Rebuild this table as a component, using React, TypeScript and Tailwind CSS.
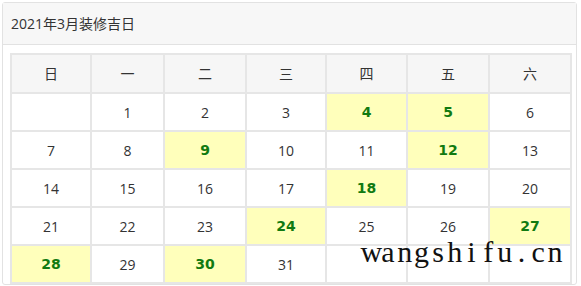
import React from "react";

const weeks: (number | null)[][] = [
  [null, 1, 2, 3, 4, 5, 6],
  [7, 8, 9, 10, 11, 12, 13],
  [14, 15, 16, 17, 18, 19, 20],
  [21, 22, 23, 24, 25, 26, 27],
  [28, 29, 30, 31, null, null, null],
];
const lucky = new Set([4, 5, 9, 12, 18, 24, 27, 28, 30]);
const heads = ["日", "一", "二", "三", "四", "五", "六"];
const widths = [80, 73, 82, 80, 81, 82, 82];
const mark = "wangshifu.cn".split("");

export default function App() {
  return (
    <div className="w-[581px] h-[286px] bg-white overflow-hidden relative" style={{ fontFamily: '"Open Sans", "Noto Sans CJK SC", sans-serif' }}>
      <div className="ml-[2px] mt-[2px] w-[575px] border border-[#e2e2e2] rounded-[3px]">
        <div className="h-[42px] bg-[#f7f7f7] border-b border-[#e2e2e2] flex items-center pl-[8px] text-[14px] text-[#333]">
          2021年3月装修吉日
        </div>
        <div className="pt-[8px] pl-[7px] pr-[6px]">
          <table className="border-collapse table-fixed w-[561px] text-[14px] text-[#333]">
            <colgroup>
              {widths.map((w, i) => (
                <col key={i} style={{ width: w }} />
              ))}
            </colgroup>
            <thead>
              <tr>
                {heads.map((h) => (
                  <th key={h} className="h-[39px] border-2 border-[#e6e6e6] bg-[#f6f6f6] font-normal text-center">
                    {h}
                  </th>
                ))}
              </tr>
            </thead>
            <tbody>
              {weeks.map((w, ri) => (
                <tr key={ri}>
                  {w.map((d, ci) => {
                    const l = d !== null && lucky.has(d);
                    return (
                      <td
                        key={ci}
                        className={
                          l
                            ? "h-[38px] border-2 border-[#e6e6e6] bg-[#ffffbb] text-center font-bold text-[#117a11] font-['DejaVu_Sans',sans-serif]"
                            : "h-[38px] border-2 border-[#e6e6e6] text-center"
                        }
                      >
                        {d ?? ""}
                      </td>
                    );
                  })}
                </tr>
              ))}
            </tbody>
          </table>
        </div>
      </div>
      <div className="absolute left-[363px] top-[235px] flex text-[30px] leading-[34px] text-[#111] font-['Liberation_Serif',serif]">
        {mark.map((c, i) => (
          <span key={i} className="w-[16.7px] flex justify-center">
            {c}
          </span>
        ))}
      </div>
    </div>
  );
}
